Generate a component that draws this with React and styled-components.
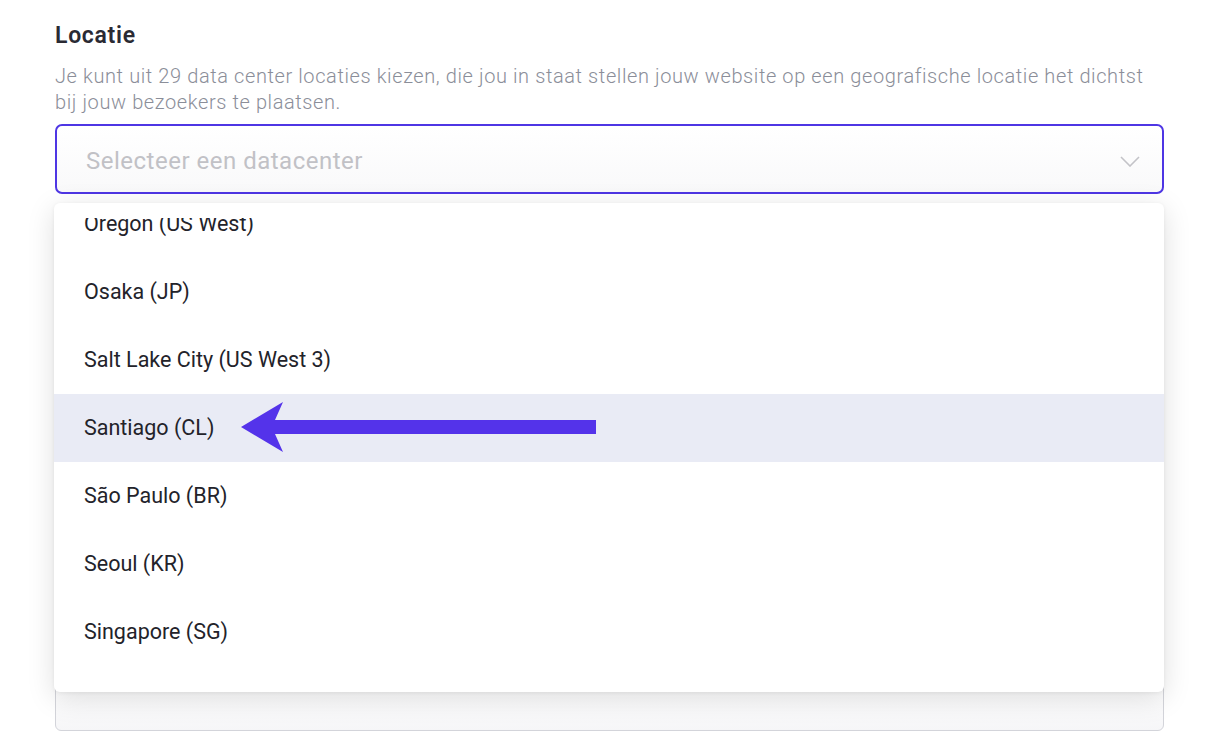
import React from 'react';
import styled, { createGlobalStyle } from 'styled-components';

const GlobalStyle = createGlobalStyle`
  html, body {
    margin: 0;
    padding: 0;
    background: #ffffff;
    font-family: Roboto, "Liberation Sans", sans-serif;
    -webkit-font-smoothing: antialiased;
  }
`;

const Page = styled.div`
  width: 1220px;
  height: 732px;
  overflow: hidden;
  padding: 21px 0 0 55px;
  box-sizing: border-box;
`;

const Field = styled.div`
  position: relative;
  width: 1109px;
`;

const Title = styled.h2`
  margin: 0 0 12px;
  font-size: 23px;
  line-height: 30px;
  font-weight: 600;
  letter-spacing: 0.7px;
  color: #2a2a33;
`;

const Help = styled.p`
  margin: 0 0 9px;
  font-size: 20px;
  line-height: 26px;
  font-weight: 300;
  letter-spacing: 0.6px;
  color: #8b8e99;
`;

const SelectBox = styled.div`
  height: 70px;
  box-sizing: border-box;
  border: 2px solid #4e36e4;
  border-radius: 7px;
  background: linear-gradient(#ffffff, #f9f9fa);
  display: flex;
  align-items: center;
  justify-content: space-between;
  padding: 4px 22px 0 29px;
`;

const Placeholder = styled.span`
  font-size: 24px;
  letter-spacing: 0.5px;
  color: #c1c1c6;
`;

const Menu = styled.div`
  position: absolute;
  top: calc(100% + 9px);
  left: -1px;
  right: 0;
  z-index: 2;
  background: #fff;
  border-radius: 6px;
  box-shadow: 0 6px 28px rgba(0, 0, 0, 0.13), 0 1px 4px rgba(0, 0, 0, 0.06);
  padding: 15px 0 10px;
`;

const Viewport = styled.div`
  height: 464px;
  overflow: hidden;
`;

const List = styled.ul`
  list-style: none;
  margin: -28px 0 0;
  padding: 0;
`;

const Option = styled.li`
  height: 68px;
  display: flex;
  align-items: center;
  padding-left: 30px;
  padding-bottom: 2px;
  box-sizing: border-box;
  font-size: 21.5px;
  color: #23232a;
  background: ${p => (p.active ? '#e9ebf5' : 'transparent')};
  position: relative;
`;

const Pointer = styled.svg`
  position: absolute;
  left: 187px;
  top: 8px;
`;

const NextInput = styled.div`
  margin-top: 487px;
  width: 1109px;
  height: 50px;
  box-sizing: border-box;
  border: 1px solid #d3d4da;
  border-radius: 6px;
  background: linear-gradient(#ffffff, #f6f6f8);
`;

const Chevron = () => (
  <svg width="20" height="11" viewBox="0 0 20 11" fill="none">
    <path d="M1 1l9 9 9-9" stroke="#c3c3c8" strokeWidth="1.6" />
  </svg>
);

const Arrow = () => (
  <Pointer width="360" height="52" viewBox="0 0 360 52">
    <polygon
      points="0,25 42,0 34,18 355,18 355,32 34,32 42,50"
      fill="#5433ea"
    />
  </Pointer>
);

const options = [
  'Oregon (US West)',
  'Osaka (JP)',
  'Salt Lake City (US West 3)',
  'Santiago (CL)',
  'São Paulo (BR)',
  'Seoul (KR)',
  'Singapore (SG)'
];

export default function App() {
  return (
    <Page>
      <GlobalStyle />
      <Field>
        <Title>Locatie</Title>
        <Help>
          Je kunt uit 29 data center locaties kiezen, die jou in staat stellen jouw website op een geografische locatie het dichtst bij jouw bezoekers te plaatsen.
        </Help>
        <div style={{ position: 'relative' }}>
          <SelectBox>
            <Placeholder>Selecteer een datacenter</Placeholder>
            <Chevron />
          </SelectBox>
          <Menu>
            <Viewport>
              <List>
                {options.map(o => (
                  <Option key={o} active={o === 'Santiago (CL)'}>
                    {o}
                    {o === 'Santiago (CL)' && <Arrow />}
                  </Option>
                ))}
              </List>
            </Viewport>
          </Menu>
        </div>
        <NextInput />
      </Field>
    </Page>
  );
}
